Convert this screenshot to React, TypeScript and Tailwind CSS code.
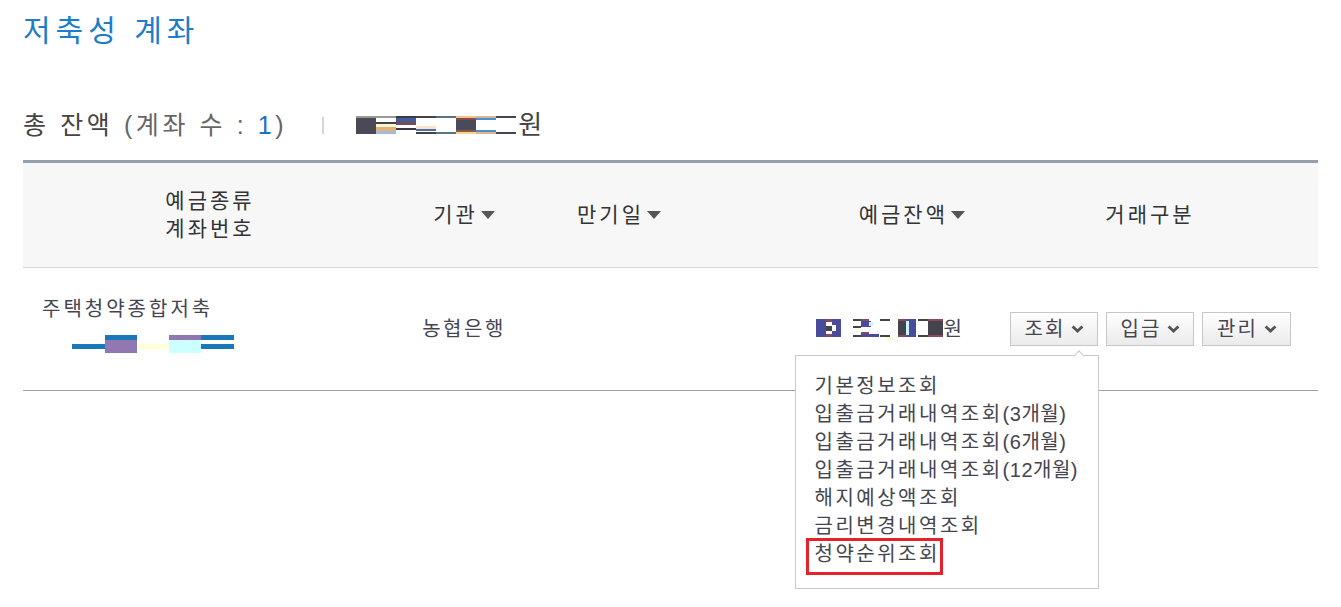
import React from 'react';

type Rect = [number, number, number, number, string];

// pixelated (masked) amounts and account number, drawn as small blocks
const totalAmount: Rect[] = [
  [0, 0, 20, 2, '#999'], [0, 2, 20, 16, '#4a4a56'],
  [20, 0, 20, 2, '#999'], [20, 6, 20, 2, '#444'], [20, 8, 20, 3, '#fff4d0'], [20, 11, 20, 4, '#e2b277'], [20, 15, 20, 3, '#a6b8dc'],
  [40, 0, 20, 2, '#3a3a44'], [40, 2, 20, 3, '#3c5ea8'], [40, 5, 20, 4, '#6d5060'], [40, 12, 20, 2, '#3a3a44'],
  [60, 0, 20, 2, '#444'], [60, 10, 20, 3, '#fde2c4'], [60, 13, 20, 2, '#4a6fb2'], [60, 16, 20, 2, '#444'],
  [80, 0, 20, 2, '#5b7282'], [80, 16, 20, 2, '#5b7282'],
  [100, 0, 20, 2, '#eec48e'], [100, 2, 20, 2, '#8c4b42'], [100, 4, 20, 10, '#4a4a58'], [100, 14, 20, 2, '#8e5c44'], [100, 16, 20, 2, '#f6d496'],
  [120, 0, 20, 2, '#d9b88f'], [120, 2, 20, 2, '#4b8fd2'], [120, 14, 20, 2, '#4b8fd2'], [120, 16, 20, 2, '#d9b88f'],
  [140, 0, 20, 2, '#444454'], [140, 16, 20, 2, '#444454'],
];

const rowAmount: Rect[] = [
  [0, 0, 10, 18, '#4b4b9b'],
  [10, 0, 6, 3, '#8b4a5a'], [10, 7, 6, 5, '#44444f'], [10, 15, 6, 3, '#8b4a5a'],
  [16, 0, 9, 18, '#4b4b9b'], [16, 6, 4, 6, '#fff'],
  [37, 0, 8, 2, '#444'], [37, 7, 8, 2, '#444'], [37, 16, 8, 2, '#444'],
  [45, 0, 8, 2, '#8b4a5a'], [45, 2, 10, 6, '#4b4b9b'], [53, 3, 4, 4, '#ccf5ff'], [45, 13, 8, 2, '#8b4a5a'], [45, 15, 18, 3, '#4b4b9b'],
  [64, 0, 10, 2, '#444'], [64, 16, 10, 2, '#444'], [70, 18, 8, 3, '#ffffd5'],
  [82, 0, 8, 2, '#8b4a5a'], [82, 2, 8, 14, '#44444f'], [82, 16, 8, 2, '#8b4a5a'],
  [90, 0, 10, 18, '#4b4b9b'], [90, 2, 3, 14, '#ccf5ff'],
  [102, 0, 10, 2, '#444'], [102, 16, 10, 2, '#444'],
  [112, 0, 15, 2, '#8b4a5a'], [112, 2, 15, 14, '#44444f'], [112, 16, 15, 2, '#8b4a5a'],
];

const accountNo: Rect[] = [
  [0, 9, 33, 5, '#1a78b8'],
  [33, 0, 32, 5, '#1a78b8'], [33, 5, 32, 13, '#9178b2'],
  [65, 9, 32, 5, '#ffffd8'],
  [97, 0, 32, 5, '#9178b2'], [97, 5, 32, 13, '#ccffff'],
  [129, 0, 33, 5, '#1a78b8'], [129, 9, 33, 5, '#1a78b8'],
];

function Masked({ w, h, rects }: { w: number; h: number; rects: Rect[] }) {
  return (
    <svg width={w} height={h} viewBox={`0 0 ${w} ${h}`} shapeRendering="crispEdges" className="block">
      {rects.map(([x, y, rw, rh, c], i) => (
        <rect key={i} x={x} y={y} width={rw} height={rh} fill={c} />
      ))}
    </svg>
  );
}

function SortArrow() {
  return (
    <svg width="14" height="8" viewBox="0 0 14 8" className="ml-[3px]">
      <path d="M0 0h14L7 8z" fill="#555" />
    </svg>
  );
}

function Chevron() {
  return (
    <svg width="13" height="8" viewBox="0 0 13 8" className="ml-[6px]">
      <path d="M1.6 1.4 6.5 6l4.9-4.6" stroke="#555" strokeWidth="2.8" fill="none" />
    </svg>
  );
}

function DropButton({ label, w }: { label: string; w: string }) {
  return (
    <button
      className={`flex h-[34px] ${w} items-center justify-center border border-[#c6c6c6] bg-gradient-to-b from-white to-[#ebebeb] pl-[2px] text-[20px] leading-[26px] tracking-[2px] text-[#454550]`}
    >
      {label}
      <Chevron />
    </button>
  );
}

const menuItems: [string, string][] = [
  ['기본정보조회', ''],
  ['입출금거래내역조회', '(3개월)'],
  ['입출금거래내역조회', '(6개월)'],
  ['입출금거래내역조회', '(12개월)'],
  ['해지예상액조회', ''],
  ['금리변경내역조회', ''],
];

export default function App() {
  return (
    <div className="min-h-screen bg-white px-[23px] pt-[13px] font-['Liberation_Sans','Noto_Sans_CJK_KR',sans-serif] text-[#444]">
      {/* Title */}
      <h1 className="text-[30px] leading-[36px] tracking-[5px] text-[#1b7dcb] font-normal">저축성 계좌</h1>

      {/* Total balance */}
      <div className="mt-[60px] flex h-[32px] items-center">
        <span className="text-[25px] leading-[32px] tracking-[3.6px] text-[#444]">
          총 잔액 <span className="text-[#666]">(계좌 수 : <span className="text-[#1e6fc0]">1</span>)</span>
        </span>
        <span className="ml-[35px] h-[17px] w-[2px] bg-[#d6d6d6]" />
        <div className="ml-[32px] flex items-center">
          <Masked w={160} h={18} rects={totalAmount} />
          <span className="ml-[2px] text-[26px] leading-[32px] text-[#444]">원</span>
        </div>
      </div>

      {/* Table */}
      <div className="mt-[19px] border-t-[3px] border-[#969fae]">
        <div className="grid h-[105px] grid-cols-[374px_134px_176px_275px_336px] items-center border-b border-[#d4d4d4] bg-[#f7f7f7] text-[21px] leading-[28px] tracking-[3px] text-[#333]">
          <div className="text-center">
            예금종류
            <br />
            계좌번호
          </div>
          <div className="flex items-center justify-center">
            기관
            <SortArrow />
          </div>
          <div className="flex items-center justify-center">
            만기일
            <SortArrow />
          </div>
          <div className="flex items-center justify-end pr-[17px]">
            예금잔액
            <SortArrow />
          </div>
          <div className="text-center">거래구분</div>
        </div>

        <div className="grid h-[123px] grid-cols-[374px_134px_176px_275px_336px] items-center border-b border-[#9ca2aa] text-[20px] leading-[26px] text-[#454550]">
          <div className="flex flex-col pb-[10px] pl-[19px]">
            <span className="tracking-[3px]">주택청약종합저축</span>
            <div className="ml-[30px] mt-[13px]">
              <Masked w={162} h={18} rects={accountNo} />
            </div>
          </div>
          <div className="text-center tracking-[2.5px]">농협은행</div>
          <div />
          <div className="flex items-center justify-end pr-[20px]">
            <Masked w={127} h={21} rects={rowAmount} />
            <span className="ml-[1px]">원</span>
          </div>
          <div className="flex items-center justify-center gap-[8px]">
            <div className="relative">
              <DropButton label="조회" w="w-[88px]" />
              {/* dropdown menu */}
              <div className="absolute -right-[1px] top-[43px] z-10 h-[234px] w-[304px] border border-[#cacaca] bg-white pl-[19px] pt-[16px] text-left text-[20px] leading-[28px] tracking-[2.5px] text-[#454550]">
                <div className="absolute -top-[4px] right-[15px] h-[8px] w-[8px] rotate-45 border-l border-t border-[#cacaca] bg-white" />
                {menuItems.map(([m, sub]) => (
                  <div key={m + sub} className="whitespace-nowrap">
                    {m}
                    {sub && <span className="tracking-[0.5px]">{sub}</span>}
                  </div>
                ))}
                <div className="relative inline-block whitespace-nowrap">
                  청약순위조회
                  <span className="absolute -bottom-[7px] -left-[9px] -right-[3px] -top-[2px] border-[3px] border-[#e5222a]" />
                </div>
              </div>
            </div>
            <DropButton label="입금" w="w-[88px]" />
            <DropButton label="관리" w="w-[89px]" />
          </div>
        </div>
      </div>
    </div>
  );
}
